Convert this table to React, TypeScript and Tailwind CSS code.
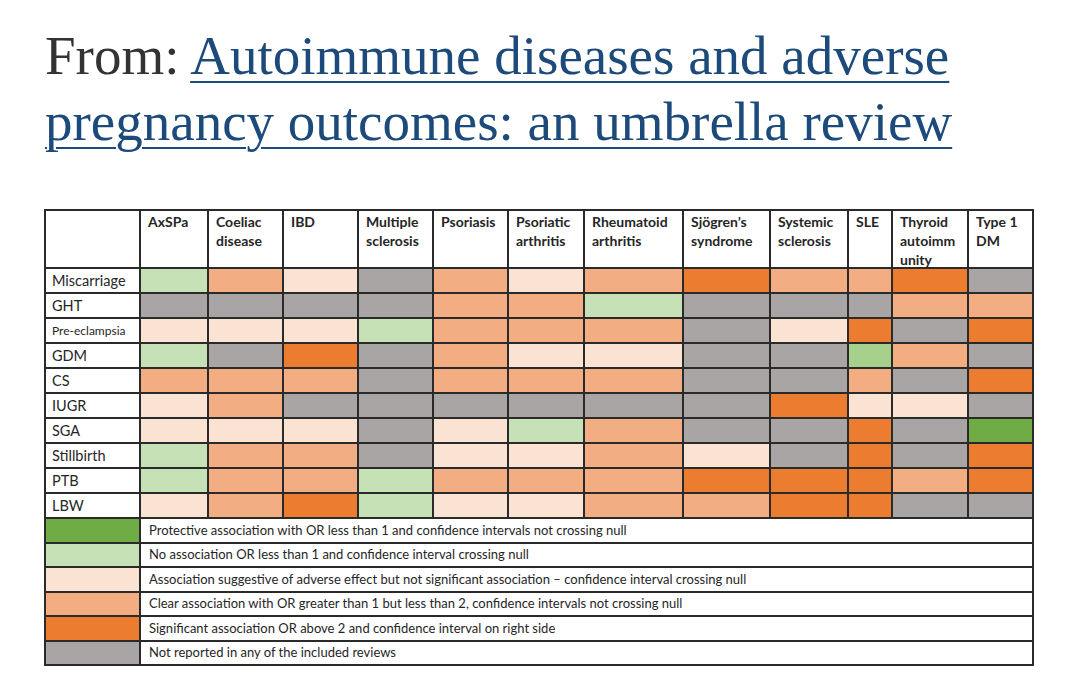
import { Fragment } from "react";

const C = {
  G: "bg-[#6fac46]",
  L: "bg-[#c6e1b5]",
  P: "bg-[#fbe3d4]",
  O: "bg-[#f2ae82]",
  R: "bg-[#ec7c30]",
  X: "bg-[#a9a5a5]",
} as const;

type K = keyof typeof C;

const headers = [
  ["AxSPa"],
  ["Coeliac", "disease"],
  ["IBD"],
  ["Multiple", "sclerosis"],
  ["Psoriasis"],
  ["Psoriatic", "arthritis"],
  ["Rheumatoid", "arthritis"],
  ["Sjögren’s", "syndrome"],
  ["Systemic", "sclerosis"],
  ["SLE"],
  ["Thyroid", "autoimm", "unity"],
  ["Type 1", "DM"],
];

const rows: { label: string; small?: boolean; cells: string }[] = [
  { label: "Miscarriage", cells: "LOPXOPOROORX" },
  { label: "GHT", cells: "XXXXOOLXXXOO" },
  { label: "Pre-eclampsia", small: true, cells: "PPPLOOOXPRXR" },
  { label: "GDM", cells: "LXRXOPPXXlOX" },
  { label: "CS", cells: "OOOXOOOXXOXR" },
  { label: "IUGR", cells: "POXXXXXXRPPX" },
  { label: "SGA", cells: "PPPXPLOXXRXG" },
  { label: "Stillbirth", cells: "LOOXPPOPXRXR" },
  { label: "PTB", cells: "LOOLOOORRROR" },
  { label: "LBW", cells: "PORLPPOORRXX" },
];

const legend: [K, string][] = [
  ["G", "Protective association with OR less than 1 and confidence intervals not crossing null"],
  ["L", "No association OR less than 1 and confidence interval crossing null"],
  ["P", "Association suggestive of adverse effect but not significant association – confidence interval crossing null"],
  ["O", "Clear association with OR greater than 1 but less than 2, confidence intervals not crossing null"],
  ["R", "Significant association OR above 2 and confidence interval on right side"],
  ["X", "Not reported in any of the included reviews"],
];

function cellColor(ch: string) {
  // lower-case l is the slightly deeper green in the SLE column
  if (ch === "l") return "bg-[#a8d08d]";
  return C[ch as K];
}

export default function App() {
  return (
    <div className="w-[1080px] h-[681px] bg-white overflow-hidden pl-[45px] pt-[23px]">
      <h1 className="font-['Liberation_Serif',serif] text-[55px] leading-[66px] text-[#333] w-[980px]">
        <span>From: </span>
        <a
          href="#"
          className="text-[#1c4a7b] underline decoration-[2px] underline-offset-[7px]"
        >
          Autoimmune diseases and adverse pregnancy outcomes: an umbrella review
        </a>
      </h1>

      <div className="mt-[54px] -ml-[1px] w-fit grid grid-cols-[93px_66px_73px_73px_73px_73px_74px_97px_85px_76px_42px_74px_63px] gap-[2px] p-[2px] bg-[#2a2a2a] font-['Lato',sans-serif] text-[#262626]">
        <div className="h-[56px] bg-white" />
        {headers.map((h, i) => (
          <div
            key={i}
            className="h-[56px] bg-white pl-[7px] pt-[1px] text-[14px] leading-[19px] font-bold"
          >
            {h.map((l) => (
              <div key={l}>{l}</div>
            ))}
          </div>
        ))}

        {rows.map((r) => (
          <Fragment key={r.label}>
            <div
              className={`h-[23px] bg-white pl-[6px] flex items-center ${
                r.small ? "text-[12px]" : "text-[14.5px]"
              }`}
            >
              {r.label}
            </div>
            {r.cells.split("").map((c, j) => (
              <div key={j} className={`h-[23px] ${cellColor(c)}`} />
            ))}
          </Fragment>
        ))}

        {legend.map(([k, text]) => (
          <Fragment key={k}>
            <div className={`h-[22.5px] ${C[k]}`} />
            <div className="col-span-12 h-[22.5px] bg-white pl-[8px] flex items-center text-[13px]">
              {text}
            </div>
          </Fragment>
        ))}
      </div>
    </div>
  );
}
